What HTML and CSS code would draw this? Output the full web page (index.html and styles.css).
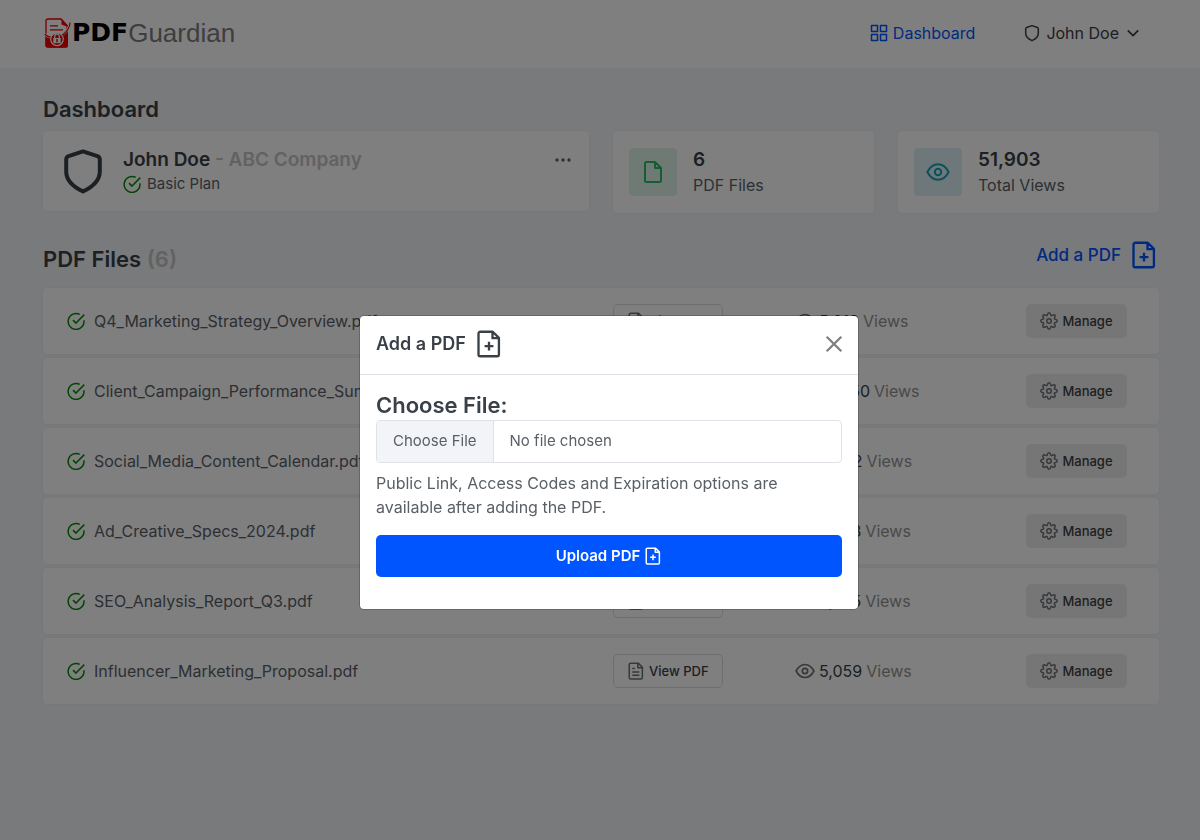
FILE: index.html
```html
<!DOCTYPE html>
<html lang="en">
<head>
<meta charset="utf-8">
<meta name="viewport" content="width=device-width, initial-scale=1">
<title>PDFGuardian - Dashboard</title>
<link rel="stylesheet" href="styles.css">
</head>
<body>
<svg class="sprite" aria-hidden="true">
  <symbol id="shield" viewBox="0 0 24 24"><path d="M12 2.2 19.200 4.600Q20.400 5 20.400 6.300V12.200C20.400 16.600 16.600 20 12 22.200 7.400 20 3.600 16.600 3.600 12.200V6.300Q3.600 5 4.800 4.600Z"/></symbol>
  <symbol id="grid" viewBox="0 0 24 24"><path d="M2 2h8v8H2zM14 2h8v8H14zM2 14h8v8H2zM14 14h8v8H14z"/></symbol>
  <symbol id="chevron" viewBox="0 0 24 24"><path d="m3 7.500 9 9 9-9"/></symbol>
  <symbol id="check" viewBox="0 0 24 24"><path d="M17 3.200A10.600 10.600 0 1 0 22.600 11M8 10.800l4 4L23 3.500"/></symbol>
  <symbol id="eye" viewBox="0 0 24 24"><path d="M1.300 12C4 7 7.600 4.200 12 4.200S20 7 22.700 12C20 17 16.400 19.800 12 19.800S4 17 1.300 12Z"/><circle cx="12" cy="12" r="3.200"/></symbol>
  <symbol id="file" viewBox="0 0 24 24"><path d="M5.500 2h8.500L20 8v12.500a1.500 1.500 0 0 1-1.500 1.500h-13A1.500 1.500 0 0 1 4 20.500v-17A1.500 1.500 0 0 1 5.500 2ZM14 2.300V8h5.700"/></symbol>
  <symbol id="file-plus" viewBox="0 0 24 24"><path d="M4.500 1.500h10.700l5.300 5.300v14.200a1.500 1.500 0 0 1-1.500 1.500H4.500A1.500 1.500 0 0 1 3 21V3a1.500 1.500 0 0 1 1.500-1.500ZM15 1.800V7h5.200M12 10v7.500M8.200 13.800h7.600"/></symbol>
  <symbol id="file-text" viewBox="0 0 24 24"><path d="M5 1.500h10L20.500 7v13.500a2 2 0 0 1-2 2H5a2 2 0 0 1-2-2v-17a2 2 0 0 1 2-2ZM14.500 1.800V7.500h5.700M7 8.500h3.500M7 13.200h9.500M7 17.500h9.500"/></symbol>
  <symbol id="gear" viewBox="0 0 24 24"><path d="M9.800 3.800Q10.200 1 12 1t2.200 2.800Q14.600 5.400 16.200 4.600 18.500 3 19.800 4.200T19.400 7.800Q18.600 9.400 20.200 9.800 23 10.200 23 12t-2.800 2.200Q18.600 14.600 19.400 16.200 21 18.500 19.800 19.800T16.200 19.400Q14.600 18.600 14.200 20.200 13.800 23 12 23t-2.200-2.800Q9.400 18.600 7.800 19.400 5.500 21 4.200 19.800T4.600 16.200Q5.400 14.600 3.800 14.200 1 13.800 1 12t2.800-2.200Q5.400 9.400 4.600 7.800 3 5.500 4.200 4.200T7.800 4.600Q9.400 5.400 9.800 3.800Z"/><circle cx="12" cy="12" r="3"/></symbol>
  <symbol id="dots" viewBox="0 0 24 24"><g fill="currentColor" stroke="none"><circle cx="3" cy="12" r="2.500"/><circle cx="12" cy="12" r="2.500"/><circle cx="21" cy="12" r="2.500"/></g></symbol>
  <symbol id="close" viewBox="0 0 16 16"><path d="m1.500 1.500 13 13M14.500 1.500l-13 13"/></symbol>
</svg>

<header class="topbar">
  <a class="brand" href="#" aria-label="PDFGuardian">
    <svg class="brand-mark" viewBox="0 0 28 30" aria-hidden="true">
      <path d="M4 1h13l6 6.500V27.500a1.500 1.500 0 0 1-1.500 1.500H4a2 2 0 0 1-2-2V3a2 2 0 0 1 2-2Z" fill="#fff" stroke="#f00000" stroke-width="1.300"/>
      <path d="M17.500.8 24 7.800l-.5 1-6-2.300ZM1.500 19c5 1.500 9 .5 13-1.500 4-2 7-4.500 9.500-7.500V28a1.500 1.500 0 0 1-1.500 1.500H3A1.500 1.500 0 0 1 1.500 28Z" fill="#f00000"/>
      <path d="M6 7.800h8M6 11.800h13" stroke="#f00000" stroke-width="1.300"/>
      <path d="M.8 15.500c4 7 20 3.500 23.700-6Q26 7.500 26 4.500" fill="none" stroke="#fff" stroke-width="2.500"/>
      <path d="M.8 16c5 6 19 3.500 23.200-5Q26 8 26 4.500" fill="none" stroke="#f00000" stroke-width="1.200"/>
      <circle cx="13" cy="21.300" r="6.300" fill="#f00000" stroke="#fff" stroke-width="1.200"/>
      <path d="M10.700 20v-1.500a2.300 2.300 0 0 1 4.600 0V20" fill="none" stroke="#fff" stroke-width="1.300"/>
      <rect x="9.300" y="20" width="7.400" height="5.200" fill="#fff"/>
      <path d="M13 21v3.200" stroke="#f00000" stroke-width="1.500"/>
    </svg>
    <span class="brand-pdf">PDF</span><span class="brand-name">Guardian</span>
  </a>
  <nav class="nav">
    <a class="nav-link active" href="#"><svg class="icon"><use href="#grid"/></svg>Dashboard</a>
    <a class="nav-link" href="#"><svg class="icon"><use href="#shield"/></svg>John Doe<svg class="icon caret"><use href="#chevron"/></svg></a>
  </nav>
</header>

<main class="page">
  <h1 class="heading">Dashboard</h1>
  <section class="summary">
    <article class="card account">
      <svg class="icon account-shield"><use href="#shield"/></svg>
      <div class="card-text">
        <h2 class="card-title">John Doe <span class="muted">- ABC Company</span></h2>
        <p class="plan"><svg class="icon ok"><use href="#check"/></svg>Basic Plan</p>
      </div>
      <button class="more" type="button" aria-label="Account options"><svg class="icon"><use href="#dots"/></svg></button>
    </article>
    <article class="card stat">
      <div class="tile green"><svg class="icon"><use href="#file"/></svg></div>
      <div class="card-text"><h2 class="card-title">6</h2><p class="stat-label">PDF Files</p></div>
    </article>
    <article class="card stat">
      <div class="tile teal"><svg class="icon"><use href="#eye"/></svg></div>
      <div class="card-text"><h2 class="card-title">51,903</h2><p class="stat-label">Total Views</p></div>
    </article>
  </section>

  <div class="files-head">
    <h2 class="heading">PDF Files <span class="muted">(6)</span></h2>
    <a class="add-link" href="#">Add a PDF<svg class="icon large"><use href="#file-plus"/></svg></a>
  </div>

  <ul class="files">
    <li class="file"><span class="file-name"><svg class="icon ok"><use href="#check"/></svg>Q4_Marketing_Strategy_Overview.pdf</span><span class="view-cell"><button class="btn outline" type="button"><svg class="icon"><use href="#file-text"/></svg>View PDF</button></span><span class="views"><svg class="icon"><use href="#eye"/></svg>5,013 <span class="muted-text">Views</span></span><button class="btn soft" type="button"><svg class="icon"><use href="#gear"/></svg>Manage</button></li>
    <li class="file"><span class="file-name"><svg class="icon ok"><use href="#check"/></svg>Client_Campaign_Performance_Summary.pdf</span><span class="view-cell"><button class="btn outline" type="button"><svg class="icon"><use href="#file-text"/></svg>View PDF</button></span><span class="views"><svg class="icon"><use href="#eye"/></svg>12,450 <span class="muted-text">Views</span></span><button class="btn soft" type="button"><svg class="icon"><use href="#gear"/></svg>Manage</button></li>
    <li class="file"><span class="file-name"><svg class="icon ok"><use href="#check"/></svg>Social_Media_Content_Calendar.pdf</span><span class="view-cell"><button class="btn outline" type="button"><svg class="icon"><use href="#file-text"/></svg>View PDF</button></span><span class="views"><svg class="icon"><use href="#eye"/></svg>8,932 <span class="muted-text">Views</span></span><button class="btn soft" type="button"><svg class="icon"><use href="#gear"/></svg>Manage</button></li>
    <li class="file"><span class="file-name"><svg class="icon ok"><use href="#check"/></svg>Ad_Creative_Specs_2024.pdf</span><span class="view-cell"><button class="btn outline" type="button"><svg class="icon"><use href="#file-text"/></svg>View PDF</button></span><span class="views"><svg class="icon"><use href="#eye"/></svg>9,873 <span class="muted-text">Views</span></span><button class="btn soft" type="button"><svg class="icon"><use href="#gear"/></svg>Manage</button></li>
    <li class="file"><span class="file-name"><svg class="icon ok"><use href="#check"/></svg>SEO_Analysis_Report_Q3.pdf</span><span class="view-cell"><button class="btn outline" type="button"><svg class="icon"><use href="#file-text"/></svg>View PDF</button></span><span class="views"><svg class="icon"><use href="#eye"/></svg>6,575 <span class="muted-text">Views</span></span><button class="btn soft" type="button"><svg class="icon"><use href="#gear"/></svg>Manage</button></li>
    <li class="file"><span class="file-name"><svg class="icon ok"><use href="#check"/></svg>Influencer_Marketing_Proposal.pdf</span><span class="view-cell"><button class="btn outline" type="button"><svg class="icon"><use href="#file-text"/></svg>View PDF</button></span><span class="views"><svg class="icon"><use href="#eye"/></svg>5,059 <span class="muted-text">Views</span></span><button class="btn soft" type="button"><svg class="icon"><use href="#gear"/></svg>Manage</button></li>
  </ul>
</main>

<div class="backdrop">
  <section class="modal" role="dialog" aria-modal="true" aria-labelledby="modal-title">
    <header class="modal-head">
      <h2 class="modal-title" id="modal-title">Add a PDF<svg class="icon large"><use href="#file-plus"/></svg></h2>
      <button class="close" type="button" aria-label="Close"><svg class="icon"><use href="#close"/></svg></button>
    </header>
    <form class="modal-body">
      <label class="field-label" for="pdf">Choose File:</label>
      <input class="file-input" id="pdf" type="file" accept="application/pdf">
      <p class="hint">Public Link, Access Codes and Expiration options are available after adding the PDF.</p>
      <button class="upload" type="submit">Upload PDF<svg class="icon"><use href="#file-plus"/></svg></button>
    </form>
  </section>
</div>
</body>
</html>
```
FILE: styles.css
```css
* { box-sizing: border-box; }
body {
  margin: 0;
  min-height: 100vh;
  background: #f3f4f8;
  color: #5a6067;
  font: 16px/24px Inter, "Liberation Sans", sans-serif;
}
h1, h2, p, ul { margin: 0; padding: 0; }
a { color: inherit; text-decoration: none; }
button { font: inherit; color: inherit; cursor: pointer; }
.sprite { display: none; }
.icon {
  width: 18px;
  height: 18px;
  flex: none;
  fill: none;
  stroke: currentColor;
  stroke-width: 2;
  stroke-linejoin: round;
}
.icon.large { width: 28px; height: 28px; }
.ok { color: #008a00; }
.muted { color: #c4c4c4; }
.muted-text { color: #929292; }

.topbar {
  display: flex;
  align-items: center;
  justify-content: space-between;
  height: 68px;
  padding: 0 60px 2px 44px;
  background: #fff;
}
.brand { display: flex; align-items: center; }
.brand-mark { width: 28px; height: 30px; }
.brand-pdf { color: #000; font: 700 25px/32px "DejaVu Sans", sans-serif; }
.brand-name { color: #7d7d7d; font: 26px/32px "Liberation Sans", sans-serif; }
.nav { display: flex; gap: 48px; }
.nav-link { display: flex; align-items: center; gap: 5px; color: #3a4047; }
.nav-link.active { color: #05f; }
.caret { width: 14px; height: 14px; stroke-width: 3; margin-left: 2px; }

.page { padding: 25px 41px 24px 43px; }
.heading { color: #3a4047; font-size: 22px; line-height: 32px; font-weight: 600; }
.summary {
  display: grid;
  grid-template-columns: repeat(12, 1fr);
  gap: 24px;
  align-items: start;
  margin-top: 6px;
}
.card {
  grid-column: span 3;
  display: flex;
  align-items: center;
  gap: 16px;
  padding: 16px;
  border-radius: 4px;
  background: #fff;
  box-shadow: 0 0 2px rgba(60, 64, 90, .08);
}
.stat { height: 82px; }
.account { grid-column: span 6; height: 80px; }
.account-shield { width: 48px; height: 48px; color: #3a4047; }
.card-text { flex: 1; }
.card-title { color: #3a4047; font-size: 19px; line-height: 26px; font-weight: 600; }
.plan { display: flex; align-items: center; gap: 6px; font-size: 15px; line-height: 22px; }
.more { display: flex; align-self: flex-start; padding: 5px 2px; border: 0; background: none; }
.more .icon { width: 16px; height: 16px; }
.tile { display: flex; align-items: center; justify-content: center; width: 48px; height: 48px; border-radius: 4px; }
.tile .icon { width: 24px; height: 24px; }
.green { background: #e0f5ea; color: #2cb968; }
.teal { background: #dcf1f4; color: #16a2b8; }

.files-head { display: flex; align-items: flex-start; justify-content: space-between; margin-top: 28px; }
.files-head .heading { padding-top: 2px; }
.add-link { display: flex; align-items: center; gap: 9px; padding-right: 1px; color: #05f; font-size: 17px; font-weight: 500; }
.files { display: flex; flex-direction: column; gap: 4px; margin-top: 13px; list-style: none; }
.file {
  display: grid;
  grid-template-columns: 546fr 182fr 231fr 101px;
  align-items: center;
  height: 66px;
  padding: 0 32px 0 24px;
  border-radius: 4px;
  background: #fff;
  box-shadow: 0 0 2px rgba(60, 64, 90, .08);
}
.file-name, .views { display: flex; align-items: center; gap: 4px; white-space: nowrap; }
.file-name { gap: 9px; }
.views { color: #3a4047; }
.views .icon { width: 20px; height: 20px; color: #6c7075; }
.btn {
  display: inline-flex;
  align-items: center;
  gap: 4px;
  height: 34px;
  padding: 0 13px;
  border-radius: 5px;
  color: #3a4047;
  font-size: 13px;
  font-weight: 500;
  line-height: 20px;
  white-space: nowrap;
}
.btn .icon { color: #6c7075; }
.outline { border: 1px solid #ddd; background: #fff; }
.soft { justify-content: center; border: 0; padding: 0; background: #ededed; }

.backdrop {
  position: fixed;
  inset: 0;
  display: flex;
  align-items: center;
  justify-content: center;
  padding: 85px 0 0 18px;
  background: rgba(0, 0, 0, .5);
}
.modal { width: 100%; max-width: 498px; border-radius: 4px; background: #fff; box-shadow: 0 0 0 1px rgba(0, 0, 0, .2); }
.modal-head {
  display: flex;
  align-items: center;
  justify-content: space-between;
  height: 59px;
  padding: 0 15px 3px 16px;
  border-bottom: 1px solid #dfe2e9;
}
.modal-title { display: flex; align-items: center; gap: 9px; color: #3a4047; font-size: 18px; font-weight: 600; }
.close { display: flex; padding: 0; border: 0; background: none; color: #7f7f7f; }
.close .icon { stroke-width: 2; }
.modal-body { display: flex; flex-direction: column; padding: 16px 16px 32px; }
.field-label { color: #3a4047; font-size: 22px; line-height: 29px; font-weight: 600; }
.file-input {
  width: 100%;
  height: 43px;
  border: 1px solid #dfe2e9;
  border-radius: 4px;
  color: #5a6067;
  font: 15px/39px Inter, "Liberation Sans", sans-serif;
}
.file-input::file-selector-button {
  height: 41px;
  margin: 0 16px 0 0;
  padding: 0 16px 2px;
  border: 0;
  border-right: 1px solid #dfe2e9;
  background: #f3f4f8;
  color: #5a6067;
  font: inherit;
}
.hint { margin: 8px 0 16px; }
.upload {
  display: flex;
  align-items: center;
  justify-content: center;
  gap: 4px;
  height: 42px;
  border: 0;
  border-radius: 5px;
  background: #05f;
  color: #fff;
  font-size: 15px;
  font-weight: 600;
}
```
